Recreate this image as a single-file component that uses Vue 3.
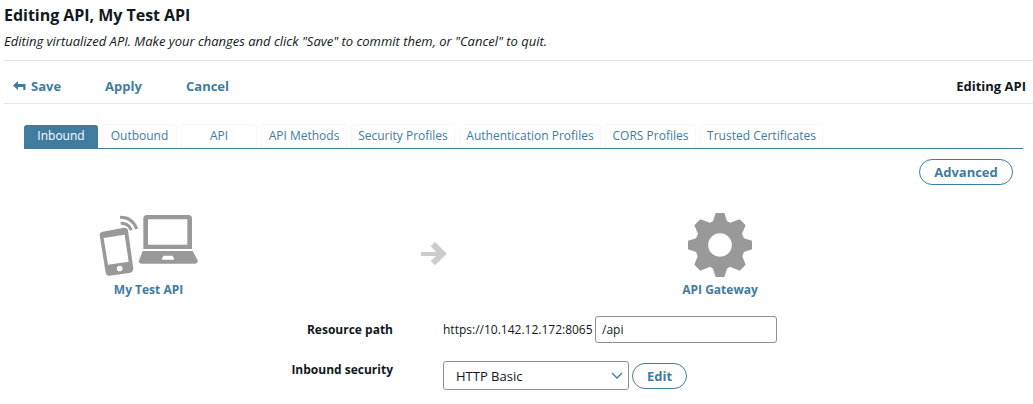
<script setup>
const tabs = [
  { label: 'Inbound', width: 74 },
  { label: 'Outbound', width: 75 },
  { label: 'API', width: 76 },
  { label: 'API Methods', width: 86 },
  { label: 'Security Profiles', width: 104 },
  { label: 'Authentication Profiles', width: 142 },
  { label: 'CORS Profiles', width: 91 },
  { label: 'Trusted Certificates', width: 123 },
]
</script>

<template>
  <main class="page">
    <h1>Editing API, My Test API</h1>
    <p class="intro">Editing virtualized API. Make your changes and click "Save" to commit them, or "Cancel" to quit.</p>

    <div class="toolbar">
      <a class="save">
        <svg width="13" height="10" viewBox="0 0 13 10"><path d="M0 4.500L5 0V3H12.500V9H10.300V6H5V9Z" fill="#407c9f" /></svg>
        <span>Save</span>
      </a>
      <a class="apply">Apply</a>
      <a class="cancel">Cancel</a>
      <strong>Editing API</strong>
    </div>

    <nav class="tabs">
      <a v-for="(tab, i) in tabs" :key="tab.label" class="tab" :class="{ active: i === 0 }" :style="{ width: tab.width + 'px' }">{{ tab.label }}</a>
    </nav>

    <div class="actions"><button class="pill advanced">Advanced</button></div>

    <section class="flow">
      <div class="node client">
        <svg width="100" height="66" viewBox="27 36 300 198">
          <path fill="#999" fill-rule="evenodd" d="M171 42H295Q306 42 306 53V144H160V53Q160 42 171 42ZM174 55V131H292V55Z" />
          <path fill="#999" fill-rule="evenodd" d="M158 150H308L323 178Q325 188 313 188H156Q144 188 147 178ZM220 164L215 176H253L248 164Z" />
          <path fill="#999" fill-rule="evenodd" d="M38 92L102 80Q112 79 114 88L130 203Q130 212 122 215L59 224Q49 225 47 215L29 103Q28 94 38 92ZM41 111L54 191L116 182L104 101ZM89 194A8.5 8.5 0 1 0 89 211A8.5 8.5 0 1 0 89 194Z" />
          <g fill="none" stroke="#999" stroke-width="9"><path d="M90 49Q127 48 140 84" /><path d="M92 67Q116 66 124 88" /></g>
        </svg>
        <span>My Test API</span>
      </div>
      <svg class="arrow" width="26" height="24" viewBox="0 0 26 24"><path d="M0 10H15L9.7 4.2L14 0L25.8 11.8L14 23.2L9.7 19L15 14H0Z" fill="#ccc" /></svg>
      <div class="node gateway">
        <svg width="64" height="64" viewBox="54 39 192 192">
          <path fill="#999" fill-rule="evenodd" d="M137 39H163L171 63L180 68L209 58L227 76L216 101L222 115L246 122V148L222 156L217 169L227 194L209 212L180 200L171 206L163 231H137L129 206L120 200L91 212L73 194L83 169L78 156L54 148V122L78 115L84 101L73 76L91 58L120 68L129 63ZM150 99.500A35.500 35.500 0 1 0 150 170.500A35.500 35.500 0 1 0 150 99.500Z" />
        </svg>
        <span>API Gateway</span>
      </div>
    </section>

    <form class="form">
      <label>Resource path</label>
      <div class="field path">
        <span class="host">https://10.142.12.172:8065</span>
        <input value="/api" />
      </div>
      <label class="security">Inbound security</label>
      <div class="field">
        <div class="select">
          <span>HTTP Basic</span>
          <svg width="12" height="7" viewBox="0 0 12 7"><path d="M1 1L6 6L11 1" fill="none" stroke="#407c9f" stroke-width="1.3" /></svg>
        </div>
        <button type="button" class="pill edit">Edit</button>
      </div>
    </form>
  </main>
</template>

<style>
body { background: #fff; }
</style>

<style scoped>
* { box-sizing: border-box; }
.page { height: 404px; overflow: hidden; font: 12px/16px "Open Sans", "Noto Sans", sans-serif; color: #111820; }
h1 { margin: 0; padding: 4px 0 0 4px; height: 32px; font-size: 16px; line-height: 22px; font-weight: 700; letter-spacing: -0.03px; white-space: nowrap; }
.intro { margin: 0 0 0 4px; height: 28px; font-size: 13px; line-height: 18px; font-style: italic; letter-spacing: -0.015px; white-space: nowrap; }
.toolbar { display: flex; margin-left: 4px; height: 44px; border-top: 1px solid #e6e6e6; border-bottom: 1px solid #e6e6e6; padding: 0 7px 0 9px; font-size: 13px; font-weight: 700; line-height: 51px; }
.toolbar a { color: #407c9f; }
.save { display: flex; width: 92px; }
.save svg { margin: 20px 5px 0 0; }
.apply { width: 81px; }
.toolbar strong { margin-left: auto; font-weight: 700; }
.tabs { display: flex; gap: 4px; margin: 20px 10px 0 24px; height: 25px; border-bottom: 1px solid #407c9f; }
.tab { height: 24px; border: 1px solid #f7f7f7; border-bottom: 0; border-radius: 3px 3px 0 0; color: #407c9f; line-height: 22px; text-align: center; white-space: nowrap; flex: none; }
.tab.active { margin-top: 1px; background: #407c9f; border-color: #407c9f; color: #fff; height: 23px; line-height: 20px; }
.actions { display: flex; justify-content: flex-end; padding: 10px 20px 0 0; }
.pill { padding: 0; border: 1px solid #407c9f; border-radius: 13px; background: #fff; color: #407c9f; font: 700 13px/22px "Open Sans", sans-serif; height: 26px; }
.advanced { width: 94px; }
.flow { display: flex; height: 126px; padding: 28px 0 0 99px; }
.node { display: flex; flex-direction: column; align-items: center; color: #407c9f; font-weight: 700; }
.node span { white-space: nowrap; }
.client { width: 99px; }
.client span { margin-top: 3px; }
.arrow { margin: 29px 0 0 223px; }
.gateway { width: 100px; margin-left: 223px; }
.gateway span { margin-top: 5px; }
.form { display: grid; grid-template-columns: 393px auto; column-gap: 50px; row-gap: 18px; margin-top: 5px; }
label { text-align: right; font-weight: 700; padding-top: 6px; }
label.security { padding-top: 1px; }
.field { display: flex; }
.path { height: 27px; }
.host { width: 152px; line-height: 28px; white-space: nowrap; }
input { width: 182px; height: 27px; border: 1px solid #8f8f8f; border-radius: 3px; padding: 0 6px; font: 12px "Open Sans", sans-serif; color: #111820; }
.select { display: flex; align-items: center; justify-content: space-between; width: 186px; height: 29px; border: 1px solid #8f8f8f; border-radius: 3px; padding: 0 5px 0 12px; font-size: 13px; }
.edit { width: 55px; margin: 2px 0 0 3px; }
</style>
